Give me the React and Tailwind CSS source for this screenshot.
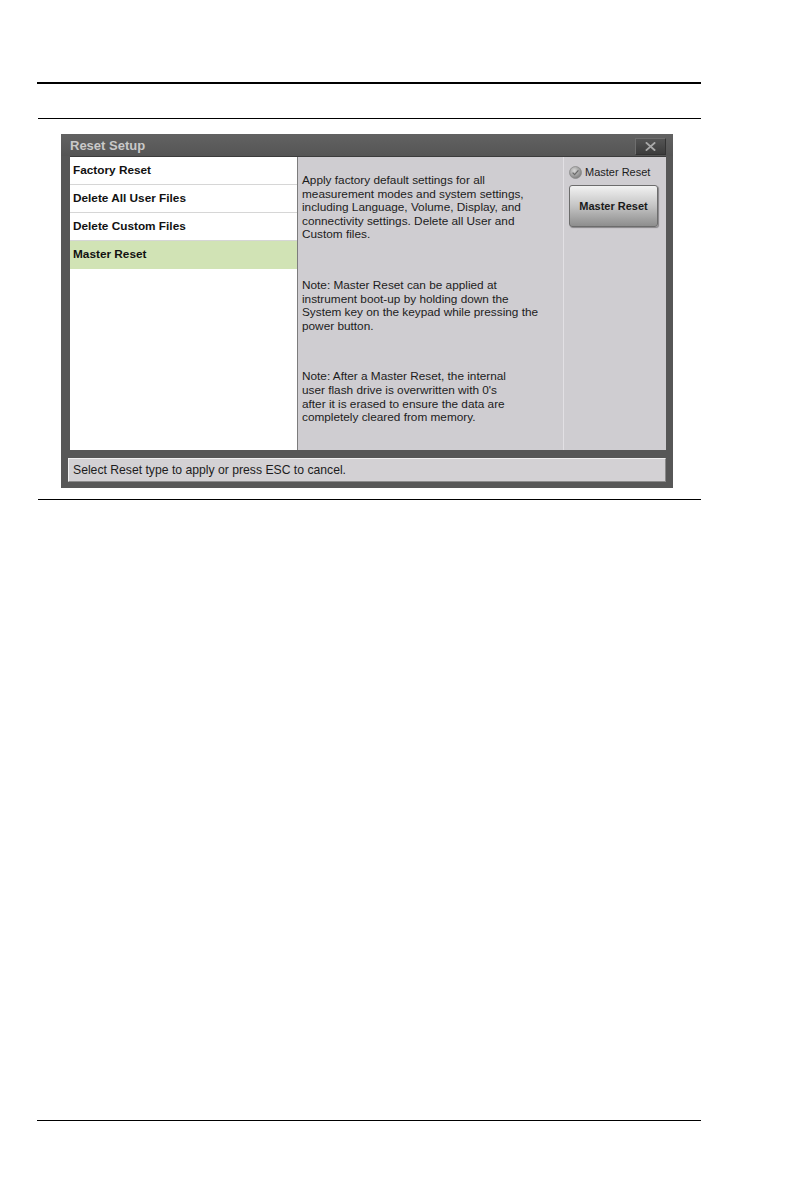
import React from 'react';

const items = [
  { label: 'Factory Reset' },
  { label: 'Delete All User Files' },
  { label: 'Delete Custom Files' },
  { label: 'Master Reset', active: true },
];

const RadioDot = () => (
  <svg width="13" height="13" viewBox="0 0 13 13" className="shrink-0">
    <defs>
      <radialGradient id="rg" cx="40%" cy="35%" r="70%">
        <stop offset="0%" stopColor="#d8d8d8" />
        <stop offset="100%" stopColor="#7a7a7a" />
      </radialGradient>
    </defs>
    <circle cx="6.5" cy="6.5" r="6" fill="url(#rg)" stroke="#8a8a8a" strokeWidth="0.8" />
    <path d="M3.6 6.6 L5.6 8.6 L9.4 4.4" fill="none" stroke="#6a6a6a" strokeWidth="1.3" />
  </svg>
);

const ResetDialog = () => (
  <div className="w-[612px] h-[354px] bg-[#575757] flex flex-col">
    {/* title bar */}
    <div className="h-[22px] flex items-center justify-between pl-[9px] pr-[7px] bg-gradient-to-b from-[#626262] to-[#555555]">
      <span className="text-[13px] font-bold text-[#c9c9c9] leading-none">Reset Setup</span>
      <button className="w-[31px] h-[17px] mt-[2px] bg-gradient-to-b from-[#545454] to-[#3c3c3c] border border-[#6e6e6e] border-r-[#333] border-b-[#333] flex items-center justify-center">
        <svg width="11" height="9" viewBox="0 0 11 9">
          <path d="M1.5 1 L9.5 8 M9.5 1 L1.5 8" stroke="#a9a9a9" strokeWidth="1.8" strokeLinecap="square" />
        </svg>
      </button>
    </div>

    {/* main area */}
    <div className="flex h-[294px] ml-[9px] mr-[7px] border-t border-[#3c3c3c]">
      <div className="w-[227px] bg-white flex flex-col">
        {items.map((it) => (
          <div
            key={it.label}
            className={
              it.active
                ? 'h-[28px] flex items-center pl-[3px] bg-[#d1e3b5] text-[11.8px] font-bold text-[#111]'
                : 'h-[28px] flex items-center pl-[3px] border-b border-[#d6d6d6] text-[11.8px] font-bold text-[#111]'
            }
          >
            {it.label}
          </div>
        ))}
      </div>

      <div className="w-[266px] bg-[#cfcdd1] border-l border-[#7c7c7c] pl-[4px] pt-[17px] text-[11.8px] leading-[13.6px] text-[#1c1c1c]">
        <p>
          Apply factory default settings for all<br />
          measurement modes and system settings,<br />
          including Language, Volume, Display, and<br />
          connectivity settings. Delete all User and<br />
          Custom files.
        </p>
        <p className="mt-[37px]">
          Note: Master Reset can be applied at<br />
          instrument boot-up by holding down the<br />
          System key on the keypad while pressing the<br />
          power button.
        </p>
        <p className="mt-[37px]">
          Note: After a Master Reset, the internal<br />
          user flash drive is overwritten with 0's<br />
          after it is erased to ensure the data are<br />
          completely cleared from memory.
        </p>
      </div>

      <div className="flex-1 bg-[#cfcdd1] border-l border-[#e2e0e4] pl-[5px] pt-[9px]">
        <div className="flex items-center gap-[3px]">
          <RadioDot />
          <span className="text-[11px] text-[#1c1c1c] leading-none">Master Reset</span>
        </div>
        <button className="mt-[6px] w-[89px] h-[42px] rounded-[3px] border border-[#6c6c6c] bg-gradient-to-b from-[#f2f2f2] via-[#c4c4c4] to-[#8e8e8e] shadow-[1px_1px_1px_rgba(0,0,0,0.35)] text-[11px] font-bold text-[#1a1a1a]">
          Master Reset
        </button>
      </div>
    </div>

    {/* status bar */}
    <div className="mt-[8px] ml-[7px] mr-[7px] h-[24px] bg-[#d3d1d4] border border-[#f0f0f0] border-r-[#8a8a8a] border-b-[#8a8a8a] flex items-center pl-[4px] text-[12.2px] text-[#1c1c1c]">
      Select Reset type to apply or press ESC to cancel.
    </div>
  </div>
);

export default function App() {
  return (
    <div className="w-[792px] h-[1192px] bg-white font-['Liberation_Sans',Arial,sans-serif]">
      <div className="ml-[37px] w-[664px] pt-[82px]">
        <div className="h-[2px] bg-black" />
        <div className="h-[1px] bg-black mt-[34px] ml-[1px]" />
        <div className="mt-[15px] ml-[24px]">
          <ResetDialog />
        </div>
        <div className="h-[1px] bg-black mt-[11px] ml-[1px]" />
        <div className="h-[1px] bg-black mt-[620px]" />
      </div>
    </div>
  );
}
